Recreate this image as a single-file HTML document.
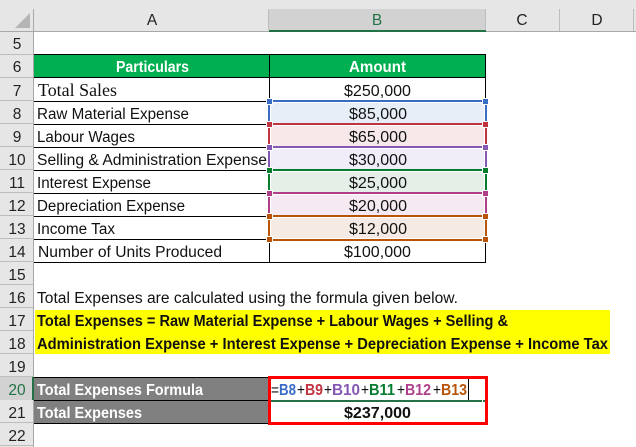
<!DOCTYPE html>
<html><head><meta charset="utf-8"><style>
html,body{margin:0;padding:0;background:#fff;width:636px;height:447px;overflow:hidden}
svg{display:block}
text{font-family:"Liberation Sans",sans-serif;font-size:15.5px;fill:#111}
.h{font-size:15.5px;fill:#222;text-anchor:middle}
.b{font-weight:bold}
.w{font-weight:bold;fill:#fff}
</style></head><body>
<svg width="636" height="447" viewBox="0 0 636 447" xmlns="http://www.w3.org/2000/svg" shape-rendering="crispEdges">
<rect width="636" height="447" fill="#fff"/>
<!-- headers -->
<rect width="636" height="32" fill="#e6e6e6"/>
<rect width="34" height="447" fill="#e6e6e6"/>
<rect x="269" y="9" width="217" height="21" fill="#d2d2d2"/>
<rect x="34" y="31" width="602" height="1" fill="#a8a8a8"/>
<rect x="0" y="31" width="34" height="1" fill="#a8a8a8"/>
<rect x="269" y="30" width="217" height="2" fill="#217346"/>
<rect x="33" y="9" width="1" height="438" fill="#a8a8a8"/>
<rect x="268" y="9" width="1" height="21" fill="#bdbdbd"/>
<rect x="485" y="9" width="1" height="21" fill="#bdbdbd"/>
<rect x="559" y="9" width="1" height="22" fill="#bdbdbd"/>
<rect x="633" y="9" width="1" height="22" fill="#bdbdbd"/>
<polygon points="30,13 30,28 15,28" fill="#b5b5b5" shape-rendering="auto"/>
<!-- row header separators -->
<g fill="#bdbdbd">
<rect x="0" y="54" width="33" height="1"/><rect x="0" y="77" width="33" height="1"/><rect x="0" y="100" width="33" height="1"/><rect x="0" y="123" width="33" height="1"/><rect x="0" y="146" width="33" height="1"/><rect x="0" y="169" width="33" height="1"/><rect x="0" y="192" width="33" height="1"/><rect x="0" y="215" width="33" height="1"/><rect x="0" y="238" width="33" height="1"/><rect x="0" y="261" width="33" height="1"/><rect x="0" y="284" width="33" height="1"/><rect x="0" y="307" width="33" height="1"/><rect x="0" y="330" width="33" height="1"/><rect x="0" y="353" width="33" height="1"/><rect x="0" y="376" width="33" height="1"/><rect x="0" y="422" width="33" height="1"/><rect x="0" y="445" width="33" height="1"/>
</g>
<rect x="0" y="377" width="32" height="23" fill="#d2d2d2"/>
<rect x="32" y="377" width="2" height="23" fill="#217346"/>
<!-- column letters -->
<text class="h" x="152" y="25">A</text>
<text class="h" x="377" y="25" style="fill:#217346">B</text>
<text class="h" x="522" y="25">C</text>
<text class="h" x="597" y="25">D</text>
<!-- row numbers -->
<g>
<text class="h" x="17" y="49">5</text><text class="h" x="17" y="72">6</text><text class="h" x="17" y="96">7</text><text class="h" x="17" y="119">8</text><text class="h" x="17" y="142">9</text><text class="h" x="17" y="165">10</text><text class="h" x="17" y="188">11</text><text class="h" x="17" y="211">12</text><text class="h" x="17" y="234">13</text><text class="h" x="17" y="257">14</text><text class="h" x="17" y="280">15</text><text class="h" x="17" y="303">16</text><text class="h" x="17" y="326">17</text><text class="h" x="17" y="349">18</text><text class="h" x="17" y="372">19</text><text class="h" x="17" y="395" style="fill:#217346">20</text><text class="h" x="17" y="418">21</text><text class="h" x="17" y="441">22</text>
</g>
<!-- table header -->
<rect x="34" y="54" width="452" height="23" fill="#00b050"/>
<!-- yellow -->
<rect x="35" y="310" width="575" height="44" fill="#ffff00"/>
<!-- gray -->
<rect x="34" y="377" width="235" height="46" fill="#808080"/>
<!-- fills -->
<rect x="271" y="103" width="213" height="20" fill="#e8eef8"/>
<rect x="271" y="126" width="213" height="20" fill="#f7e9e9"/>
<rect x="271" y="149" width="213" height="20" fill="#f0ecf8"/>
<rect x="271" y="172" width="213" height="20" fill="#e5efe7"/>
<rect x="271" y="195" width="213" height="20" fill="#f6eaf2"/>
<rect x="271" y="218" width="213" height="20" fill="#f6ebe4"/>
<!-- table lines -->
<g fill="#000">
<rect x="34" y="54" width="452" height="1"/><rect x="34" y="77" width="452" height="1"/>
<rect x="34" y="101" width="234" height="1"/><rect x="34" y="124" width="234" height="1"/><rect x="34" y="147" width="234" height="1"/><rect x="34" y="170" width="234" height="1"/><rect x="34" y="193" width="234" height="1"/><rect x="34" y="216" width="234" height="1"/><rect x="34" y="239" width="234" height="1"/>
<rect x="34" y="262" width="452" height="1"/>
<rect x="269" y="54" width="1" height="46"/><rect x="269" y="243" width="1" height="19"/>
<rect x="485" y="54" width="1" height="46"/><rect x="485" y="243" width="1" height="19"/>
<rect x="34" y="377" width="235" height="1"/><rect x="34" y="400" width="235" height="1"/><rect x="34" y="423" width="235" height="1"/>
</g>
<!-- coloured range borders -->
<g fill="#3a6cc6"><rect x="273" y="100" width="209" height="2"/><rect x="268" y="105" width="2" height="16"/><rect x="485" y="105" width="2" height="16"/></g>
<g fill="#c0343f"><rect x="273" y="123" width="209" height="2"/><rect x="268" y="128" width="2" height="16"/><rect x="485" y="128" width="2" height="16"/></g>
<g fill="#8558b4"><rect x="273" y="146" width="209" height="2"/><rect x="268" y="151" width="2" height="16"/><rect x="485" y="151" width="2" height="16"/></g>
<g fill="#067d2e"><rect x="273" y="169" width="209" height="2"/><rect x="268" y="174" width="2" height="16"/><rect x="485" y="174" width="2" height="16"/></g>
<g fill="#b03f8a"><rect x="273" y="192" width="209" height="2"/><rect x="268" y="197" width="2" height="16"/><rect x="485" y="197" width="2" height="16"/></g>
<g fill="#b75407"><rect x="273" y="215" width="209" height="2"/><rect x="268" y="220" width="2" height="16"/><rect x="485" y="220" width="2" height="16"/><rect x="273" y="239" width="209" height="2"/></g>
<!-- handles -->
<g stroke="#fff" stroke-width="1">
<rect x="266.5" y="98.5" width="6" height="6" fill="#3a6cc6"/><rect x="482.5" y="98.5" width="6" height="6" fill="#3a6cc6"/>
<rect x="266.5" y="121.5" width="6" height="6" fill="#c0343f"/><rect x="482.5" y="121.5" width="6" height="6" fill="#c0343f"/>
<rect x="266.5" y="144.5" width="6" height="6" fill="#8558b4"/><rect x="482.5" y="144.5" width="6" height="6" fill="#8558b4"/>
<rect x="266.5" y="167.5" width="6" height="6" fill="#067d2e"/><rect x="482.5" y="167.5" width="6" height="6" fill="#067d2e"/>
<rect x="266.5" y="190.5" width="6" height="6" fill="#b03f8a"/><rect x="482.5" y="190.5" width="6" height="6" fill="#b03f8a"/>
<rect x="266.5" y="213.5" width="6" height="6" fill="#b75407"/><rect x="482.5" y="213.5" width="6" height="6" fill="#b75407"/>
<rect x="266.5" y="236.5" width="6" height="6" fill="#b75407"/><rect x="482.5" y="236.5" width="6" height="6" fill="#b75407"/>
</g>
<!-- text -->
<g>
<text class="w" x="116" y="72" textLength="73" lengthAdjust="spacingAndGlyphs">Particulars</text>
<text class="w" x="349" y="72" textLength="57" lengthAdjust="spacingAndGlyphs">Amount</text>
<text x="38" y="96" textLength="79" lengthAdjust="spacingAndGlyphs" style="font-family:'Liberation Serif',serif;font-size:17.5px">Total Sales</text>
<text x="37" y="119" textLength="152" lengthAdjust="spacingAndGlyphs">Raw Material Expense</text>
<text x="37" y="142" textLength="98" lengthAdjust="spacingAndGlyphs">Labour Wages</text>
<text x="37" y="165" textLength="230" lengthAdjust="spacingAndGlyphs">Selling &amp; Administration Expense</text>
<text x="37" y="188" textLength="114" lengthAdjust="spacingAndGlyphs">Interest Expense</text>
<text x="37" y="211" textLength="148" lengthAdjust="spacingAndGlyphs">Depreciation Expense</text>
<text x="37" y="234" textLength="78" lengthAdjust="spacingAndGlyphs">Income Tax</text>
<text x="38" y="257" textLength="184" lengthAdjust="spacingAndGlyphs">Number of Units Produced</text>
<text x="344" y="96" textLength="67" lengthAdjust="spacingAndGlyphs">$250,000</text>
<text x="349" y="119" textLength="58" lengthAdjust="spacingAndGlyphs">$85,000</text>
<text x="349" y="142" textLength="58" lengthAdjust="spacingAndGlyphs">$65,000</text>
<text x="349" y="165" textLength="58" lengthAdjust="spacingAndGlyphs">$30,000</text>
<text x="349" y="188" textLength="58" lengthAdjust="spacingAndGlyphs">$25,000</text>
<text x="349" y="211" textLength="58" lengthAdjust="spacingAndGlyphs">$20,000</text>
<text x="349" y="234" textLength="58" lengthAdjust="spacingAndGlyphs">$12,000</text>
<text x="344" y="257" textLength="67" lengthAdjust="spacingAndGlyphs">$100,000</text>
<text x="37" y="303" textLength="421" lengthAdjust="spacingAndGlyphs">Total Expenses are calculated using the formula given below.</text>
<text class="b" x="37" y="326" textLength="471" lengthAdjust="spacingAndGlyphs">Total Expenses = Raw Material Expense + Labour Wages + Selling &amp;</text>
<text class="b" x="37" y="349" textLength="571" lengthAdjust="spacingAndGlyphs">Administration Expense + Interest Expense + Depreciation Expense + Income Tax</text>
<text class="w" x="37" y="395" textLength="166" lengthAdjust="spacingAndGlyphs">Total Expenses Formula</text>
<text class="w" x="37" y="418" textLength="105" lengthAdjust="spacingAndGlyphs">Total Expenses</text>
<text class="b" x="344" y="418" textLength="67" lengthAdjust="spacingAndGlyphs">$237,000</text>
<!-- formula -->
<text x="271" y="395" textLength="8" lengthAdjust="spacingAndGlyphs">=</text>
<text class="b" x="279" y="395" textLength="17" lengthAdjust="spacingAndGlyphs" style="fill:#3a6cc6">B8</text>
<text x="297" y="395" textLength="8" lengthAdjust="spacingAndGlyphs">+</text>
<text class="b" x="305" y="395" textLength="18" lengthAdjust="spacingAndGlyphs" style="fill:#c0343f">B9</text>
<text x="324" y="395" textLength="8" lengthAdjust="spacingAndGlyphs">+</text>
<text class="b" x="332" y="395" textLength="28" lengthAdjust="spacingAndGlyphs" style="fill:#8558b4">B10</text>
<text x="361" y="395" textLength="8" lengthAdjust="spacingAndGlyphs">+</text>
<text class="b" x="369" y="395" textLength="26" lengthAdjust="spacingAndGlyphs" style="fill:#067d2e">B11</text>
<text x="397" y="395" textLength="8" lengthAdjust="spacingAndGlyphs">+</text>
<text class="b" x="405" y="395" textLength="26" lengthAdjust="spacingAndGlyphs" style="fill:#b03f8a">B12</text>
<text x="433" y="395" textLength="8" lengthAdjust="spacingAndGlyphs">+</text>
<text class="b" x="441" y="395" textLength="26" lengthAdjust="spacingAndGlyphs" style="fill:#b75407">B13</text>
</g>
<rect x="468" y="379" width="1" height="21" fill="#000"/>
<rect x="271" y="400" width="211" height="2" fill="#217346"/>
<rect x="483" y="400" width="2" height="2" fill="#217346"/>
<!-- red box -->
<rect x="269.5" y="377.5" width="217" height="46" fill="none" stroke="#ff0000" stroke-width="3"/>
</svg>
</body></html>
